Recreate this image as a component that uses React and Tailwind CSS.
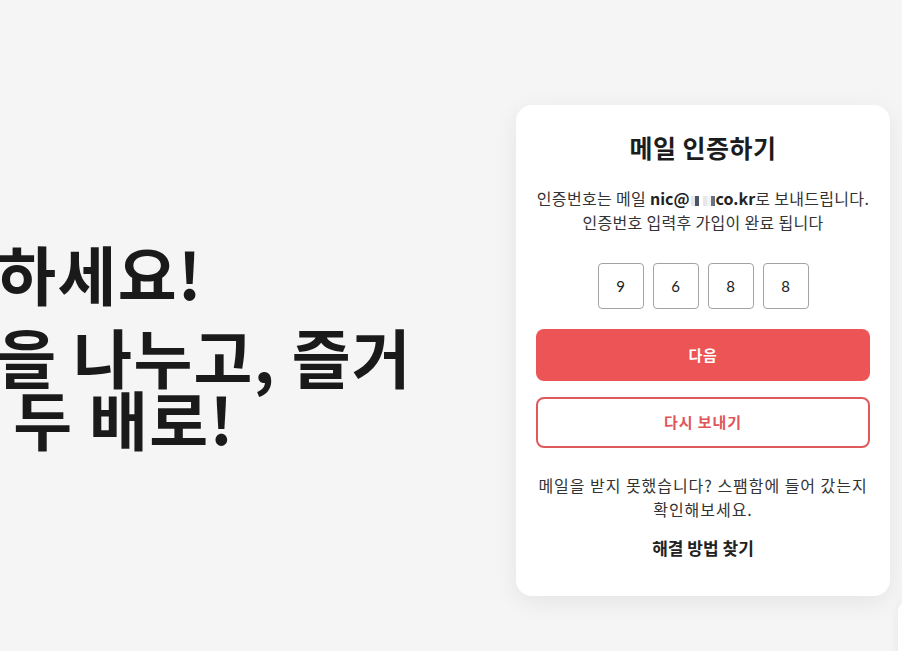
import React, { useState } from 'react';

const FONT = { fontFamily: '"Noto Sans CJK KR", "Noto Sans", sans-serif' };

function Mosaic() {
    // blurred part of the address
    const cells = ['bg-gray-200', 'bg-gray-600', 'bg-white', 'bg-gray-200', 'bg-gray-100', 'bg-gray-500'];
    return (
        <span className="inline-grid grid-cols-6 w-[24px] h-[10px] align-middle mx-[1px]">
            {cells.map((c, i) => (
                <span key={i} className={c} />
            ))}
        </span>
    );
}

function CodeInputs({ digits }) {
    return (
        <div className="flex justify-center gap-[9px] mt-[29px]">
            {digits.map((d, i) => (
                <div
                    key={i}
                    className="w-[46px] h-[46px] rounded-[4px] border border-[#a3a3a3] flex items-center justify-center text-[15px] text-[#222]"
                    style={{ fontFamily: '"Lato", "Noto Sans", sans-serif' }}
                >
                    {d}
                </div>
            ))}
        </div>
    );
}

function VerifyCard() {
    const [code] = useState(['9', '6', '8', '8']);

    return (
        <div className="w-[374px] shrink-0 rounded-2xl bg-white px-5 pt-[26px] pb-[36px] shadow-[0_6px_24px_rgba(0,0,0,0.07)] text-center">
            <h2 className="text-[25px] leading-[32px] font-bold tracking-[0.02em] text-[#1c1c1c]">메일 인증하기</h2>

            <p className="mt-[23px] text-[16px] leading-[24px] tracking-[0.02em] text-[#333] whitespace-nowrap">
                인증번호는 메일 <span className="font-semibold text-[#222] tracking-normal">nic@<Mosaic />co.kr</span>로 보내드립니다.
                <br />
                인증번호 입력후 가입이 완료 됩니다
            </p>

            <CodeInputs digits={code} />

            <button className="mt-5 w-full h-[52px] rounded-lg bg-[#ec5456] text-white text-[15px] font-bold tracking-[0.04em]">
                다음
            </button>
            <button className="mt-4 w-full h-[51px] rounded-lg border-2 border-[#e05a5c] bg-white text-[#e0555a] text-[15px] font-bold tracking-[0.06em]">
                다시 보내기
            </button>

            <p className="mt-[25px] text-[16px] leading-[24px] tracking-[0.06em] text-[#333] whitespace-nowrap">
                메일을 받지 못했습니다? 스팸함에 들어 갔는지
                <br />
                확인해보세요.
            </p>
            <p className="mt-[15px] text-[17px] leading-[24px] font-semibold text-[#222]">해결 방법 찾기</p>
        </div>
    );
}

export default function App() {
    return (
        <div className="relative min-h-[651px] bg-[#f5f5f5] overflow-hidden" style={FONT}>
            <div className="flex items-center pt-[105px] pr-3">
                {/* Hero copy, runs off the left edge */}
                <div className="flex-1 -ml-[123px] pb-3 text-[64px] leading-[62px] font-bold tracking-[0.02em] text-[#1a1a1a] whitespace-nowrap">
                    <p>안녕하세요!</p>
                    <p className="mt-[21px]">
                        기쁨을 나누고, 즐거
                        <br />
                        움은 두 배로!
                    </p>
                </div>

                <VerifyCard />
            </div>

            {/* edge of another panel peeking in */}
            <div className="absolute left-[898px] top-[600px] w-10 h-20 bg-white rounded-tl-xl shadow-[0_0_12px_rgba(0,0,0,0.06)]" />
        </div>
    );
}
